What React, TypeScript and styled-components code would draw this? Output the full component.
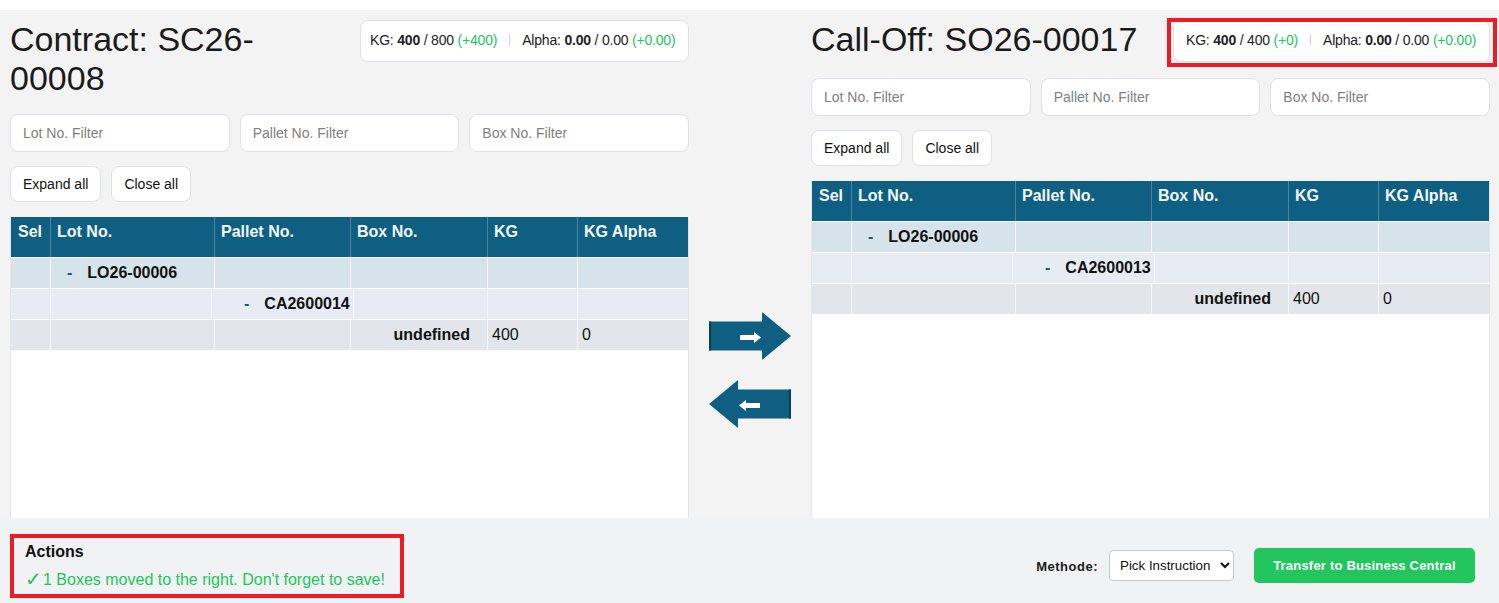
import React from "react";
import styled, { createGlobalStyle } from "styled-components";

const Global = createGlobalStyle`
  html, body { margin: 0; padding: 0; background: #fff; height: 100%; overflow: hidden; }
  body { font-family: "Liberation Sans", Arial, sans-serif; color: #111; }
`;

const Page = styled.div`
  position: relative;
  width: 1499px;
  height: 603px;
  padding-top: 10px;
  box-sizing: border-box;
  display: flex;
  flex-direction: column;
`;

const Workspace = styled.main`
  height: 508px;
  background: #f3f3f3;
  display: grid;
  grid-template-columns: 679px 122px 679px;
  padding: 10px 9px 0 10px;
  box-sizing: border-box;
`;

const Panel = styled.section`
  display: flex;
  flex-direction: column;
  min-height: 0;
  height: 498px;
`;

const PanelHead = styled.header`
  display: flex;
  justify-content: space-between;
  align-items: flex-start;
  margin-bottom: 16px;
`;

const Title = styled.h1<{ $narrow?: boolean }>`
  margin: 0;
  font-size: 34px;
  line-height: 39px;
  font-weight: 400;
  color: #1a1a1a;
  width: ${(p) => (p.$narrow ? "290px" : "auto")};
  white-space: ${(p) => (p.$narrow ? "normal" : "nowrap")};
`;

const Stats = styled.div<{ $wide?: boolean }>`
  flex: none;
  width: ${(p) => (p.$wide ? "317px" : "329px")};
  height: 42px;
  box-sizing: border-box;
  background: #fff;
  border: 1px solid #dde2ea;
  border-radius: 8px;
  padding: 0 0 2px ${(p) => (p.$wide ? "12px" : "9px")};
  display: flex;
  align-items: center;
  font-size: 14px;
  letter-spacing: -0.2px;
  color: #222;
  white-space: nowrap;
`;

const Green = styled.span`
  color: #22c55e;
`;

const Sep = styled.span`
  flex: none;
  width: 1px;
  height: 12px;
  background: #cfd4da;
  margin: 0 12px;
`;

const Filters = styled.div`
  display: grid;
  grid-template-columns: repeat(3, 1fr);
  gap: 10px;
  margin-bottom: 14px;
`;

const Filter = styled.input`
  height: 38px;
  box-sizing: border-box;
  width: 100%;
  background: #fff;
  border: 1px solid #dde2ea;
  border-radius: 8px;
  padding: 0 12px;
  font: 14px "Liberation Sans", Arial, sans-serif;
  outline: none;
  &::placeholder { color: #808080; opacity: 1; }
`;

const Buttons = styled.div`
  display: flex;
  gap: 10px;
  margin-bottom: 15px;
`;

const Btn = styled.button`
  height: 36px;
  box-sizing: border-box;
  background: #fff;
  border: 1px solid #dde2ea;
  border-radius: 8px;
  padding: 0 12px;
  font: 14px "Liberation Sans", Arial, sans-serif;
  color: #111;
`;

const TableBox = styled.div`
  flex: 1;
  background: #fff;
  border-left: 1px solid #e4e6e9;
  border-right: 1px solid #e4e6e9;
  min-height: 0;
`;

const Row = styled.div<{ $cols: string; $bg: string; $h: number }>`
  display: grid;
  grid-template-columns: ${(p) => p.$cols};
  height: ${(p) => p.$h}px;
  background: ${(p) => p.$bg};
  border-bottom: 1px solid #fff;
`;

const Head = styled.div`
  box-sizing: border-box;
  padding: 6px 0 0 6px;
  font-size: 16px;
  line-height: 18px;
  font-weight: 700;
  color: #f2f7fa;
  border-left: 1px solid #4d84a0;
  &:first-child { border-left: 0; padding-left: 7px; }
  white-space: nowrap;
`;

const Cell = styled.div<{ $align?: string; $pad?: string; $bold?: boolean }>`
  box-sizing: border-box;
  display: flex;
  align-items: center;
  justify-content: ${(p) => p.$align || "flex-start"};
  padding: ${(p) => p.$pad || "0 4px"};
  font-size: 16px;
  font-weight: ${(p) => (p.$bold ? 700 : 400)};
  color: #111;
  border-left: 1px solid #f4f6f8;
  &:first-child { border-left: 0; }
  white-space: nowrap;
`;

const Toggle = styled.span`
  color: #0f5f82;
  margin-right: 15px;
`;

const Transfer = styled.div`
  display: flex;
  flex-direction: column;
  align-items: center;
  padding-top: 292px;
  gap: 20px;
`;

const ArrowBtn = styled.svg<{ $left?: boolean }>`
  display: block;
  transform: ${(p) => (p.$left ? "scaleX(-1)" : "none")};
`;

const Footer = styled.footer`
  height: 85px;
  background: #f1f2f4;
  display: flex;
  align-items: center;
  justify-content: space-between;
  padding: 0 24px 0 25px;
  box-sizing: border-box;
`;

const Actions = styled.div`
  display: flex;
  flex-direction: column;
  gap: 9px;
  margin-top: 10px;
`;

const ActionsTitle = styled.div`
  font-size: 16px;
  line-height: 18px;
  font-weight: 700;
  color: #111;
`;

const Message = styled.div`
  font-size: 16px;
  line-height: 18px;
  color: #22c55e;
  white-space: nowrap;
`;

const Check = styled.span`
  display: inline-block;
  width: 18px;
  font-size: 20px;
  line-height: 18px;
  vertical-align: -1px;
`;

const Controls = styled.div`
  display: flex;
  align-items: center;
  margin-top: 10px;
`;

const MethodLabel = styled.label`
  font-size: 13px;
  font-weight: 700;
  letter-spacing: 0.5px;
  color: #1a1a1a;
  margin-right: 11px;
  margin-top: 1px;
`;

const MethodSelect = styled.select`
  width: 125px;
  height: 31px;
  background: #fff;
  border: 1px solid #c9c9c9;
  border-radius: 4px;
  font: 13.33px "Liberation Sans", Arial, sans-serif;
  padding: 0 0 0 6px;
  color: #111;
  margin-right: 20px;
`;

const Primary = styled.button`
  width: 221px;
  height: 35px;
  border: 0;
  border-radius: 5px;
  background: #22c55e;
  color: #fff;
  font: 700 13px "Liberation Sans", Arial, sans-serif;
  letter-spacing: 0.2px;
`;

const Highlight = styled.div<{ $x: number; $y: number; $w: number; $h: number }>`
  position: absolute;
  left: ${(p) => p.$x}px;
  top: ${(p) => p.$y}px;
  width: ${(p) => p.$w}px;
  height: ${(p) => p.$h}px;
  box-sizing: border-box;
  border: 4px solid #ed1c24;
  pointer-events: none;
`;

const COLS = "39px 164px 136px 137px 90px 1fr";
const COLS_SHIFT = "39px 161px 142px 134px 90px 1fr";

function Tree({ pallet }: { pallet: string }) {
  return (
    <TableBox>
      <Row $cols={COLS} $bg="#0f5f82" $h={40}>
        <Head>Sel</Head>
        <Head>Lot No.</Head>
        <Head>Pallet No.</Head>
        <Head>Box No.</Head>
        <Head>KG</Head>
        <Head>KG Alpha</Head>
      </Row>
      <Row $cols={COLS} $bg="#d7e3eb" $h={30}>
        <Cell />
        <Cell $bold $pad="0 0 0 16px"><Toggle>-</Toggle>LO26-00006</Cell>
        <Cell /><Cell /><Cell /><Cell />
      </Row>
      <Row $cols={COLS_SHIFT} $bg="#e7ebf3" $h={30}>
        <Cell />
        <Cell />
        <Cell $bold $pad="0 0 0 32px"><Toggle>-</Toggle>{pallet}</Cell>
        <Cell /><Cell /><Cell />
      </Row>
      <Row $cols={COLS} $bg="#e2e6ea" $h={30}>
        <Cell />
        <Cell />
        <Cell />
        <Cell $bold $align="flex-end" $pad="0 17px 0 0">undefined</Cell>
        <Cell>400</Cell>
        <Cell>0</Cell>
      </Row>
    </TableBox>
  );
}

function ArrowIcon({ left }: { left?: boolean }) {
  return (
    <ArrowBtn $left={left} width="82" height="48" viewBox="0 0 82 48">
      <path d="M0 9.5H53V0L82 24 53 48V38.5H0Z" fill="#0f5f82" />
      <rect x="0" y="9.5" width="2" height="29" fill="#0a3f58" />
      <path d="M31 23H45V20L52 25.5 45 31V28H31Z" fill="#fff" />
    </ArrowBtn>
  );
}

export default function App() {
  return (
    <>
      <Global />
      <Page>
        <Workspace>
          <Panel>
            <PanelHead>
              <Title $narrow>Contract: SC26-00008</Title>
              <Stats>
                <span>KG: <b>400</b> / 800 <Green>(+400)</Green></span>
                <Sep />
                <span>Alpha: <b>0.00</b> / 0.00 <Green>(+0.00)</Green></span>
              </Stats>
            </PanelHead>
            <Filters>
              <Filter placeholder="Lot No. Filter" />
              <Filter placeholder="Pallet No. Filter" />
              <Filter placeholder="Box No. Filter" />
            </Filters>
            <Buttons>
              <Btn>Expand all</Btn>
              <Btn>Close all</Btn>
            </Buttons>
            <Tree pallet="CA2600014" />
          </Panel>
          <Transfer>
            <ArrowIcon />
            <ArrowIcon left />
          </Transfer>
          <Panel>
            <PanelHead>
              <Title>Call-Off: SO26-00017</Title>
              <Stats $wide>
                <span>KG: <b>400</b> / 400 <Green>(+0)</Green></span>
                <Sep />
                <span>Alpha: <b>0.00</b> / 0.00 <Green>(+0.00)</Green></span>
              </Stats>
            </PanelHead>
            <Filters>
              <Filter placeholder="Lot No. Filter" />
              <Filter placeholder="Pallet No. Filter" />
              <Filter placeholder="Box No. Filter" />
            </Filters>
            <Buttons>
              <Btn>Expand all</Btn>
              <Btn>Close all</Btn>
            </Buttons>
            <Tree pallet="CA2600013" />
          </Panel>
        </Workspace>
        <Footer>
          <Actions>
            <ActionsTitle>Actions</ActionsTitle>
            <Message><Check>✓</Check>1 Boxes moved to the right. Don't forget to save!</Message>
          </Actions>
          <Controls>
            <MethodLabel>Methode:</MethodLabel>
            <MethodSelect defaultValue="pick">
              <option value="pick">Pick Instruction</option>
            </MethodSelect>
            <Primary>Transfer to Business Central</Primary>
          </Controls>
        </Footer>
        <Highlight $x={1167} $y={18} $w={330} $h={49} />
        <Highlight $x={10} $y={534} $w={394} $h={64} />
      </Page>
    </>
  );
}
